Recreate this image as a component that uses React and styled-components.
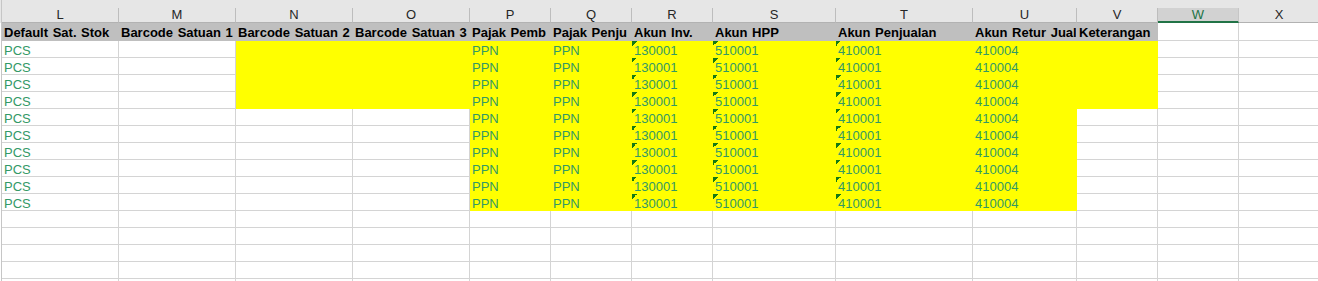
import React from "react";
import styled, { createGlobalStyle, css } from "styled-components";

const columns = [
  { id: "L", w: 117, title: "Default Sat. Stok" },
  { id: "M", w: 117, title: "Barcode Satuan 1" },
  { id: "N", w: 117, title: "Barcode Satuan 2" },
  { id: "O", w: 117, title: "Barcode Satuan 3" },
  { id: "P", w: 81, title: "Pajak Pemb" },
  { id: "Q", w: 81, title: "Pajak Penju" },
  { id: "R", w: 81, title: "Akun Inv." },
  { id: "S", w: 123, title: "Akun HPP" },
  { id: "T", w: 137, title: "Akun Penjualan" },
  { id: "U", w: 104, title: "Akun Retur Jual" },
  { id: "V", w: 81, title: "Keterangan" },
  { id: "W", w: 81, title: "" },
  { id: "X", w: 81, title: "" },
];

const values = {
  L: { text: "PCS" },
  P: { text: "PPN" },
  Q: { text: "PPN" },
  R: { text: "130001", flag: true },
  S: { text: "510001", flag: true },
  T: { text: "410001", flag: true },
  U: { text: "410004" },
};

const YELLOW = "#ffff00";
const HEAD_GRAY = "#bfbfbf";

const fillFor = (col, row) => {
  if (["P", "Q", "R", "S", "T", "U"].includes(col)) return YELLOW;
  if (["N", "O", "V"].includes(col) && row < 4) return YELLOW;
  return null;
};

const GlobalStyle = createGlobalStyle`
  body {
    margin: 0;
    background: #fff;
    font-family: "Liberation Sans", Arial, sans-serif;
  }
`;

const Sheet = styled.div`
  width: 1318px;
  height: 281px;
  overflow: hidden;
  background: #fff;
`;

const ColumnBar = styled.div`
  display: flex;
  height: 23px;
  padding-top: 8px;
  box-sizing: border-box;
  background: #e6e6e6;
`;

const Gutter = styled.div`
  flex: 0 0 2px;
  box-sizing: border-box;
  border-right: 1px solid #c6c6c6;
  background: ${(p) => (p.$head ? "#e6e6e6" : "#fff")};
  ${(p) => p.$head && css`margin-top: -8px;`}
`;

const ColHead = styled.div`
  flex: 0 0 ${(p) => p.$w}px;
  box-sizing: border-box;
  height: 15px;
  line-height: 14px;
  font-size: 13px;
  text-align: center;
  color: #262626;
  border-right: 1px solid #bdbdbd;
  border-bottom: 1px solid #b2b2b2;
  ${(p) =>
    p.$active &&
    css`
      background: #d2d2d2;
      color: #217346;
      border-bottom: 2px solid #217346;
      border-right-color: #c6c6c6;
    `}
`;

const Row = styled.div`
  display: flex;
  height: ${(p) => p.$h}px;
`;

const Cell = styled.div`
  flex: 0 0 ${(p) => p.$w}px;
  box-sizing: border-box;
  padding: 3px 2px 0;
  line-height: 13px;
  font-size: 13px;
  white-space: nowrap;
  overflow: hidden;
  color: ${(p) => (p.$bold ? "#000" : "#339966")};
  font-weight: ${(p) => (p.$bold ? 700 : 400)};
  word-spacing: ${(p) => (p.$bold ? "1px" : "0")};
  background-color: ${(p) => p.$fill || "#fff"};
  border-right: 1px solid ${(p) => p.$fill || "#d4d4d4"};
  border-bottom: 1px solid ${(p) => p.$fill || "#d4d4d4"};
  ${(p) =>
    p.$flag &&
    css`
      background-image: linear-gradient(135deg, #157a15 50%, transparent 50%);
      background-size: 5px 5px;
      background-repeat: no-repeat;
    `}
`;

const App = () => {
  const dataRows = Array.from({ length: 10 }, (_, i) => i);
  const emptyRows = Array.from({ length: 5 }, (_, i) => i);

  return (
    <>
      <GlobalStyle />
      <Sheet>
        <ColumnBar>
          <Gutter $head />
          {columns.map((c) => (
            <ColHead key={c.id} $w={c.w} $active={c.id === "W"}>
              {c.id}
            </ColHead>
          ))}
        </ColumnBar>

        <Row $h={18}>
          <Gutter />
          {columns.map((c) => (
            <Cell key={c.id} $w={c.w} $bold $fill={c.title ? HEAD_GRAY : null}>
              {c.title}
            </Cell>
          ))}
        </Row>

        {dataRows.map((r) => (
          <Row key={r} $h={17}>
            <Gutter />
            {columns.map((c) => {
              const v = values[c.id];
              return (
                <Cell key={c.id} $w={c.w} $fill={fillFor(c.id, r)} $flag={v && v.flag}>
                  {v ? v.text : ""}
                </Cell>
              );
            })}
          </Row>
        ))}

        {emptyRows.map((r) => (
          <Row key={"e" + r} $h={17}>
            <Gutter />
            {columns.map((c) => (
              <Cell key={c.id} $w={c.w} />
            ))}
          </Row>
        ))}
      </Sheet>
    </>
  );
};

export default App;
